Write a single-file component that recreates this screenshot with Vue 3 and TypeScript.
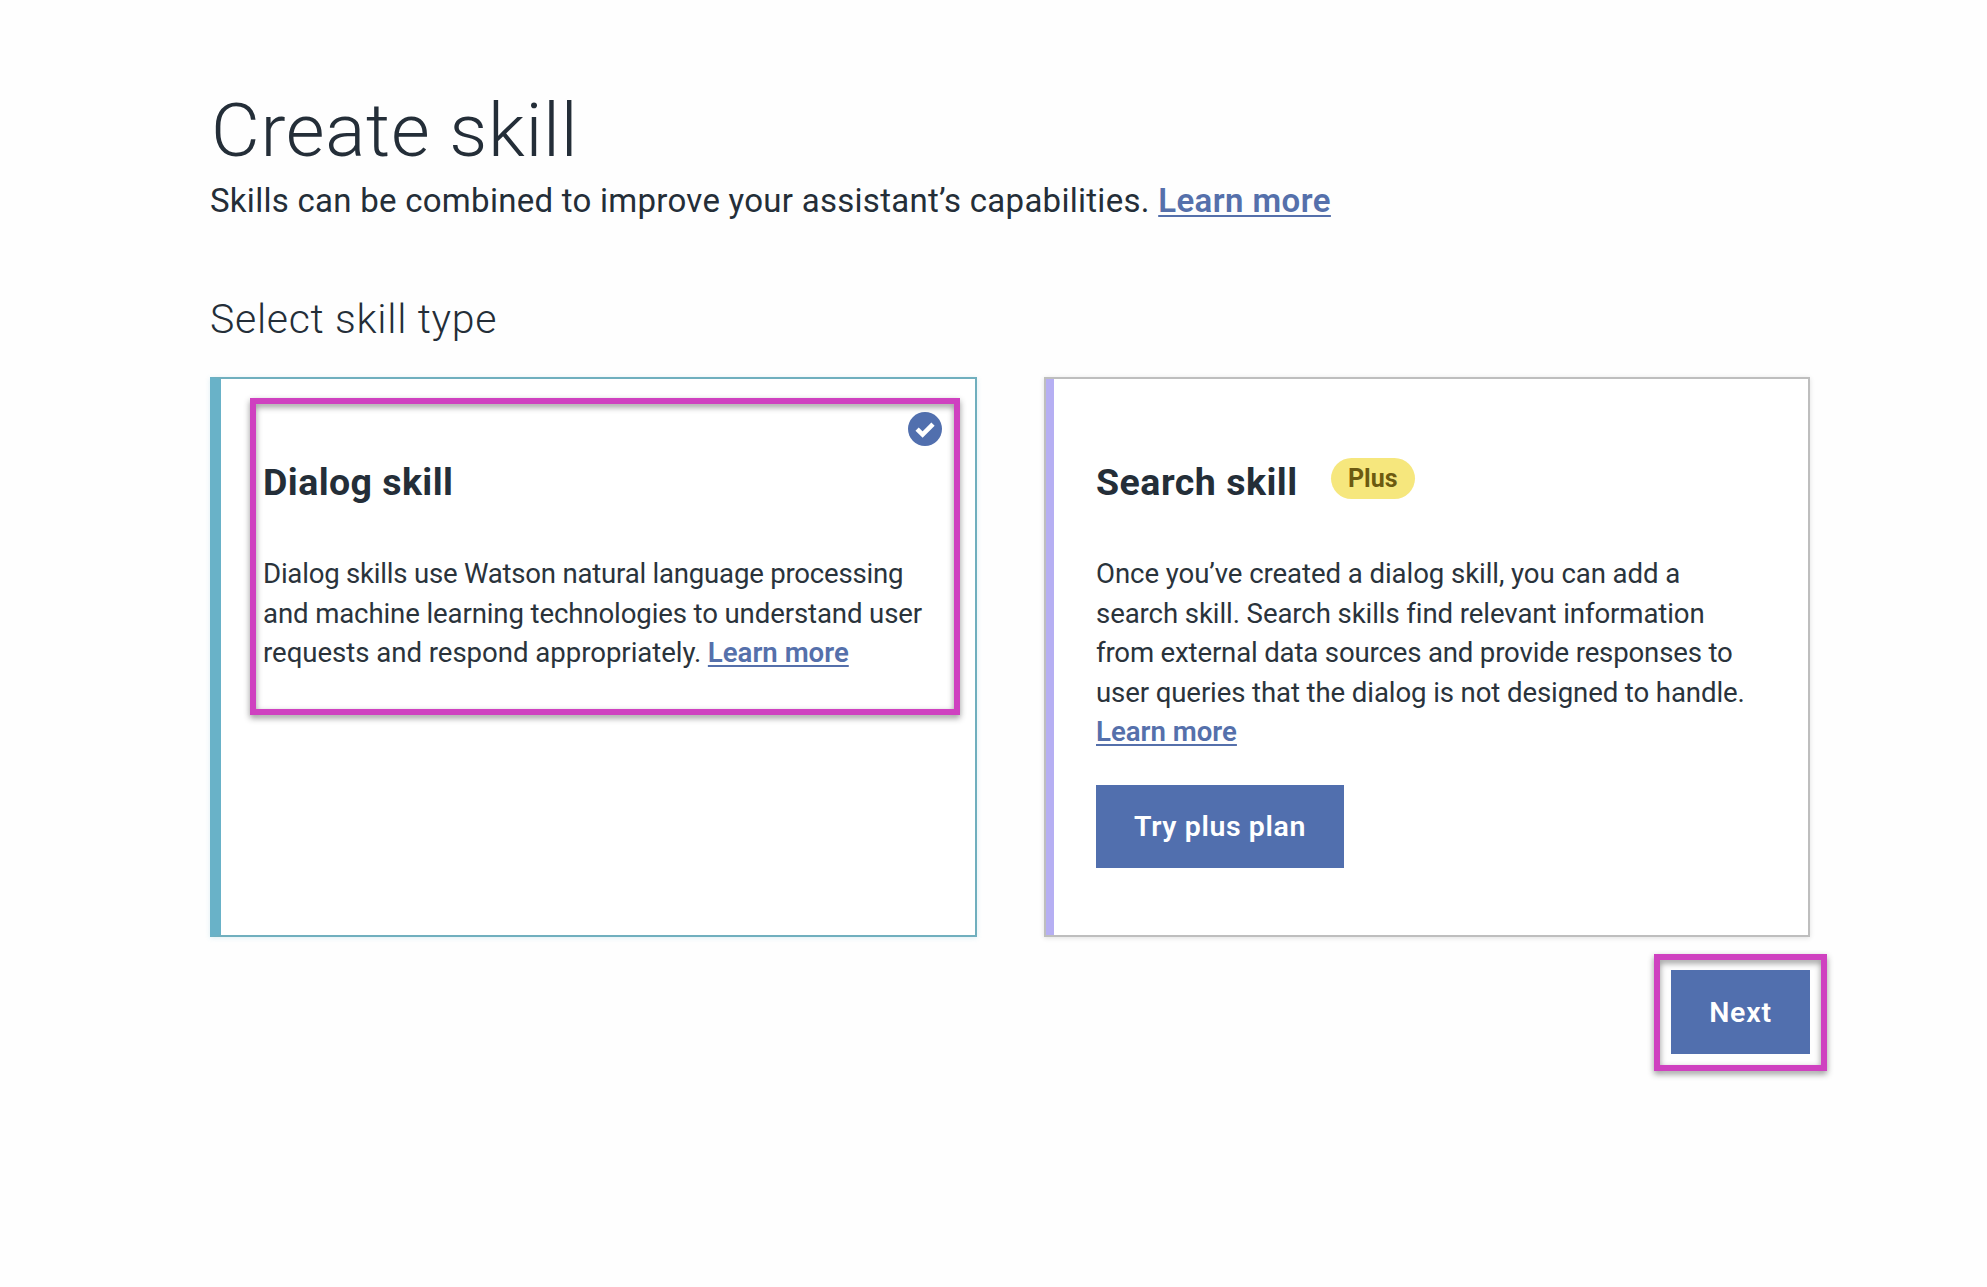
<script setup lang="ts">
interface Line {
  text: string
  spacing: number
  link?: boolean
}

const dialogLines: Line[] = [
  { text: 'Dialog skills use Watson natural language processing', spacing: -0.225 },
  { text: 'and machine learning technologies to understand user', spacing: -0.125 },
  { text: 'requests and respond appropriately.', spacing: -0.04, link: true },
]

const searchLines: Line[] = [
  { text: 'Once you’ve created a dialog skill, you can add a', spacing: -0.08 },
  { text: 'search skill. Search skills find relevant information', spacing: -0.095 },
  { text: 'from external data sources and provide responses to', spacing: -0.17 },
  { text: 'user queries that the dialog is not designed to handle.', spacing: -0.115 },
]
</script>

<template>
  <main class="page">
    <h1 class="title">Create skill</h1>
    <p class="subtitle">
      <span>Skills can be combined to improve your assistant’s capabilities.</span>
      <a class="link link-large">Learn more</a>
    </p>
    <h2 class="section">Select skill type</h2>

    <div class="cards">
      <article class="card card-dialog">
        <div class="head"><h3 class="name name-dialog">Dialog skill</h3></div>
        <div class="body">
          <div v-for="line in dialogLines" :key="line.text" class="line">
            <span :style="{ letterSpacing: line.spacing + 'px' }">{{ line.text }}</span>
            <a v-if="line.link" class="link inline-link">Learn more</a>
          </div>
        </div>
        <svg class="check" viewBox="0 0 34 34" width="34" height="34">
          <circle cx="17" cy="17" r="17" fill="#516fae" />
          <path d="M9.1 17.2L14.6 22.6L25 12.1" fill="none" stroke="#fff" stroke-width="4.6" />
        </svg>
        <div class="highlight highlight-card"></div>
      </article>

      <article class="card card-search">
        <div class="head">
          <h3 class="name">Search skill</h3>
          <span class="tag">Plus</span>
        </div>
        <div class="body">
          <div v-for="line in searchLines" :key="line.text" class="line">
            <span :style="{ letterSpacing: line.spacing + 'px' }">{{ line.text }}</span>
          </div>
          <div class="line"><a class="link">Learn more</a></div>
        </div>
        <button class="button button-plan">Try plus plan</button>
      </article>
    </div>

    <div class="footer">
      <div class="next-wrap">
        <button class="button button-next">Next</button>
        <div class="highlight highlight-next"></div>
      </div>
    </div>
  </main>
</template>

<style>
body {
  margin: 0;
  background: #fefefe;
}
</style>

<style scoped>
.page {
  box-sizing: border-box;
  width: 1987px;
  height: 1287px;
  padding: 86px 177px 0 210px;
  overflow: hidden;
  color: #242e38;
  font-family: Roboto, "Liberation Sans", sans-serif;
}
h1, h2, h3, p {
  margin: 0;
}
.title {
  height: 88px;
  margin-left: 1px;
  font-size: 75px;
  font-weight: 340;
  line-height: 88px;
  letter-spacing: 0.7px;
  white-space: nowrap;
}
.subtitle {
  display: flex;
  height: 44px;
  margin-top: 5px;
  font-size: 33px;
  line-height: 44px;
  letter-spacing: 0.27px;
  white-space: nowrap;
}
.link {
  color: #5570ab;
  font-weight: 600;
  letter-spacing: 0;
  text-decoration: underline;
  text-decoration-thickness: 2px;
  text-underline-offset: 3px;
  text-decoration-skip-ink: none;
}
.link-large {
  margin-left: 8.5px;
  letter-spacing: 0.42px;
}
.section {
  height: 52px;
  margin-top: 70px;
  font-size: 41px;
  font-weight: 340;
  line-height: 52px;
  letter-spacing: 0.69px;
}
.cards {
  display: flex;
  justify-content: space-between;
  width: 1600px;
  margin-top: 32px;
}
.card {
  position: relative;
  box-sizing: border-box;
  height: 560px;
  padding-top: 79px;
  background: #fff;
  border: 2px solid #bebebe;
  box-shadow: 0 1px 5px rgba(0, 0, 0, 0.12);
}
.card-dialog {
  width: 767px;
  padding-left: 42px;
  border-color: #70afbe;
  border-left: 11px solid #69b2c8;
  box-shadow: 0 1px 5px rgba(80, 170, 200, 0.18);
}
.card-search {
  width: 766px;
  padding-left: 50px;
}
.card-search::before {
  position: absolute;
  top: 0;
  bottom: 0;
  left: 0;
  width: 8px;
  background: #b6aff3;
  content: "";
}
.head {
  display: flex;
  height: 48px;
}
.name {
  font-size: 37.5px;
  font-weight: 700;
  line-height: 48px;
  letter-spacing: 0.5px;
}
.name-dialog {
  letter-spacing: 0.43px;
}
.tag {
  width: 84px;
  height: 41px;
  margin-left: 33px;
  border-radius: 21px;
  background: #f6e77d;
  color: #6c5a10;
  font-size: 25px;
  font-weight: 700;
  line-height: 41px;
  text-align: center;
}
.body {
  margin-top: 48px;
  color: #2a333b;
  font-size: 27.6px;
  line-height: 39.6px;
}
.line {
  display: flex;
  height: 39.6px;
  white-space: nowrap;
}
.inline-link {
  margin-left: 6.5px;
}
.button {
  display: block;
  box-sizing: border-box;
  height: 83px;
  padding: 0;
  border: 0;
  background: #516fae;
  color: #fff;
  font-family: inherit;
  font-size: 28.5px;
  font-weight: 600;
  line-height: 83px;
  text-align: center;
}
.button-plan {
  width: 248px;
  margin-top: 33px;
  letter-spacing: 0.6px;
}
.button-next {
  width: 139px;
  height: 84px;
  letter-spacing: 0.8px;
}
.check {
  position: absolute;
  top: 33px;
  right: 33px;
}
.highlight {
  position: absolute;
  box-sizing: border-box;
  border: 6px solid #cf41c0;
  filter: drop-shadow(0 3px 3px rgba(0, 0, 0, 0.42));
  pointer-events: none;
}
.highlight-card {
  top: 18.5px;
  left: 29px;
  width: 710px;
  height: 317px;
}
.footer {
  display: flex;
  justify-content: flex-end;
  width: 1600px;
  margin-top: 33px;
}
.next-wrap {
  position: relative;
}
.highlight-next {
  top: -16px;
  left: -17px;
  width: 173px;
  height: 117px;
}
</style>
